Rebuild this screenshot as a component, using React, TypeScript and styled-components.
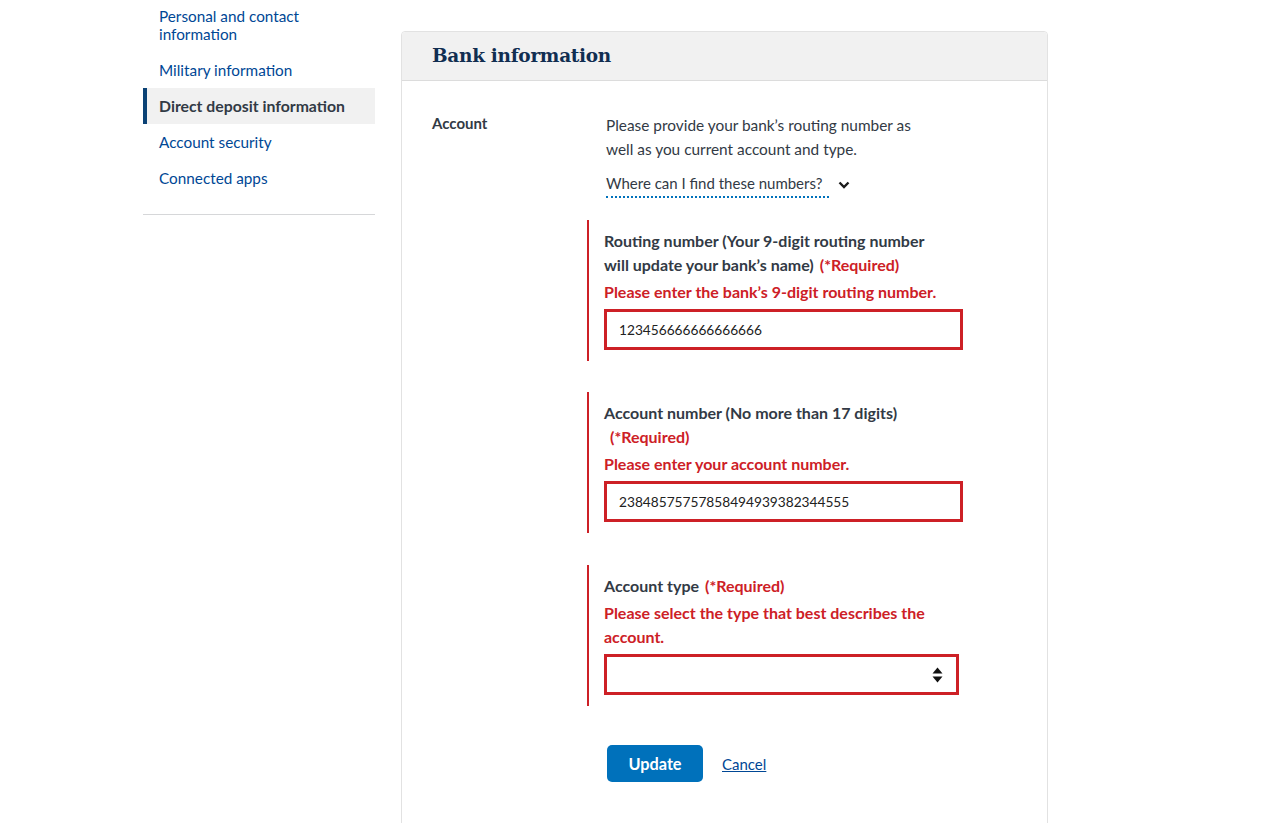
import React from "react";
import styled, { createGlobalStyle } from "styled-components";

const Global = createGlobalStyle`
  html, body { margin: 0; padding: 0; background: #ffffff; }
  body { font-family: Lato, "Source Sans Pro", "Open Sans", sans-serif; color: #323a45; }
  * { box-sizing: border-box; }
`;

const Page = styled.div`
  display: flex;
  align-items: flex-start;
  gap: 26px;
  padding-left: 143px;
  height: 823px;
  overflow: hidden;
`;

const Sidebar = styled.nav`
  width: 232px;
  flex: none;
  margin-top: -2px;
  border-bottom: 1px solid #d6d7d9;
  padding-bottom: 18px;
`;

const NavList = styled.ul`
  list-style: none;
  margin: 0;
  padding: 0;
`;

const NavItem = styled.li<{ $active?: boolean }>`
  padding: 9px 16px 9px 12px;
  border-left: 4px solid ${(p) => (p.$active ? "#0b4275" : "transparent")};
  background: ${(p) => (p.$active ? "#f1f1f1" : "transparent")};
  font-size: ${(p) => (p.$active ? "15.8px" : "15.3px")};
  line-height: 18px;
  font-weight: ${(p) => (p.$active ? 700 : 400)};
  color: ${(p) => (p.$active ? "#323a45" : "#004795")};
`;

const Card = styled.section`
  width: 647px;
  flex: none;
  margin-top: 31px;
  border: 1px solid #e2e2e2;
  border-radius: 4px 4px 0 0;
  min-height: 900px;
`;

const CardHeader = styled.header`
  background: #f1f1f1;
  border-bottom: 1px solid #dcdcdc;
  padding: 12px 30px;
  border-radius: 4px 4px 0 0;
`;

const Heading = styled.h2`
  margin: 0;
  font-family: "DejaVu Serif", "Liberation Serif", serif;
  font-weight: 700;
  font-size: 18.5px;
  line-height: 24px;
  color: #112e51;
  letter-spacing: -0.3px;
`;

const CardBody = styled.div`
  display: grid;
  grid-template-columns: 174px 1fr;
  padding: 32px 30px 40px 30px;
`;

const RowLabel = styled.div`
  font-weight: 700;
  font-size: 15px;
  line-height: 20px;
  color: #323a45;
`;

const Column = styled.div`
  display: flex;
  flex-direction: column;
  align-items: flex-start;
  width: 360px;
`;

const Intro = styled.p`
  margin: 0;
  font-size: 15.4px;
  line-height: 24px;
  max-width: 325px;
  color: #323a45;
`;

const Disclosure = styled.button`
  display: inline-flex;
  align-items: center;
  gap: 9px;
  margin-top: 10px;
  padding: 0;
  background: none;
  border: none;
  font: inherit;
  font-size: 15px;
  line-height: 24px;
  color: #323a45;
  cursor: pointer;
`;

const DisclosureText = styled.span`
  padding-bottom: 1px;
  padding-right: 6px;
  border-bottom: 2px dotted #0071bb;
`;

const ErrorBlock = styled.div<{ $gap: number }>`
  margin-top: ${(p) => p.$gap}px;
  margin-left: -19px;
  width: 379px;
  border-left: 2px solid #cd2026;
  padding: 9px 0 11px 15px;
`;

const FieldLabel = styled.label`
  display: block;
  max-width: 340px;
  font-weight: 700;
  font-size: 16px;
  line-height: 24px;
  color: #323a45;
`;

const Required = styled.span`
  color: #cd2026;
  margin-left: 6px;
`;

const ErrorMsg = styled.span`
  display: block;
  margin-top: 3px;
  max-width: 340px;
  font-weight: 700;
  font-size: 16px;
  line-height: 24px;
  color: #cd2026;
`;

const TextInput = styled.input`
  display: block;
  margin-top: 5px;
  width: 359px;
  height: 41px;
  border: 3px solid #cd2026;
  padding: 0 12px;
  font-family: Lato, sans-serif;
  font-size: 13.7px;
  color: #212121;
  background: #fff;
  outline: none;
`;

const SelectBox = styled.div`
  margin-top: 5px;
  width: 355px;
  height: 41px;
  border: 3px solid #cd2026;
  background: #fff;
  display: flex;
  align-items: center;
  justify-content: flex-end;
  padding-right: 13px;
`;

const Actions = styled.div`
  display: flex;
  align-items: center;
  gap: 19px;
  margin-top: 39px;
  margin-left: 1px;
`;

const PrimaryButton = styled.button`
  width: 96px;
  height: 37px;
  border: none;
  border-radius: 5px;
  background: #0071bb;
  color: #fff;
  font-family: Lato, sans-serif;
  font-weight: 700;
  font-size: 16.3px;
  cursor: pointer;
`;

const LinkButton = styled.a`
  font-size: 15px;
  color: #004795;
  text-decoration: underline;
  cursor: pointer;
`;

const Chevron = () => (
  <svg width="12" height="8" viewBox="0 0 12 8" aria-hidden="true">
    <path d="M1.5 1.5 L6 6 L10.5 1.5" fill="none" stroke="#1b1b1b" strokeWidth="2.4" />
  </svg>
);

const UpDown = () => (
  <svg width="11" height="16" viewBox="0 0 11 16" aria-hidden="true">
    <path d="M5.5 0.5 L10.5 6.5 H0.5 Z" fill="#111" />
    <path d="M5.5 15.5 L10.5 9.5 H0.5 Z" fill="#111" />
  </svg>
);

export default function App() {
  return (
    <>
      <Global />
      <Page>
        <Sidebar>
          <NavList>
            <NavItem>Personal and contact<br />information</NavItem>
            <NavItem>Military information</NavItem>
            <NavItem $active>Direct deposit information</NavItem>
            <NavItem>Account security</NavItem>
            <NavItem>Connected apps</NavItem>
          </NavList>
        </Sidebar>
        <Card>
          <CardHeader>
            <Heading>Bank information</Heading>
          </CardHeader>
          <CardBody>
            <RowLabel>Account</RowLabel>
            <Column>
              <Intro>
                Please provide your bank’s routing number as well as you current account and type.
              </Intro>
              <Disclosure>
                <DisclosureText>Where can I find these numbers?</DisclosureText>
                <Chevron />
              </Disclosure>

              <ErrorBlock $gap={22}>
                <FieldLabel>
                  Routing number (Your 9-digit routing number will update your bank’s name)
                  <Required>(*Required)</Required>
                </FieldLabel>
                <ErrorMsg>Please enter the bank’s 9-digit routing number.</ErrorMsg>
                <TextInput defaultValue="123456666666666666" />
              </ErrorBlock>

              <ErrorBlock $gap={31}>
                <FieldLabel>
                  Account number (No more than 17 digits)
                  <Required>(*Required)</Required>
                </FieldLabel>
                <ErrorMsg>Please enter your account number.</ErrorMsg>
                <TextInput defaultValue="23848575757858494939382344555" />
              </ErrorBlock>

              <ErrorBlock $gap={32}>
                <FieldLabel>
                  Account type
                  <Required>(*Required)</Required>
                </FieldLabel>
                <ErrorMsg>Please select the type that best describes the account.</ErrorMsg>
                <SelectBox>
                  <UpDown />
                </SelectBox>
              </ErrorBlock>

              <Actions>
                <PrimaryButton>Update</PrimaryButton>
                <LinkButton>Cancel</LinkButton>
              </Actions>
            </Column>
          </CardBody>
        </Card>
      </Page>
    </>
  );
}
